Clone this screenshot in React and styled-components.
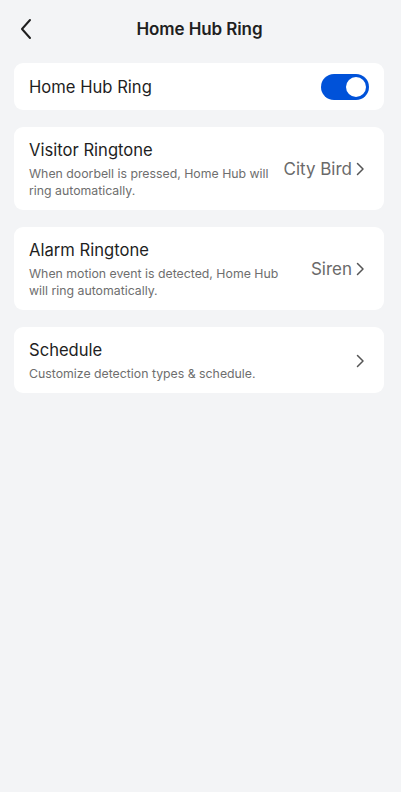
import React, { useState } from "react";
import styled, { createGlobalStyle } from "styled-components";

const Global = createGlobalStyle`
  html, body { margin: 0; padding: 0; background: #f3f4f6; }
  body { font-family: Inter, "Noto Sans", "Liberation Sans", sans-serif; -webkit-font-smoothing: antialiased; }
  * { box-sizing: border-box; }
`;

const Page = styled.div`
  min-height: 792px;
  background: #f3f4f6;
  display: flex;
  flex-direction: column;
`;

const Header = styled.header`
  height: 58px;
  display: flex;
  align-items: center;
  justify-content: center;
  position: relative;
`;

const BackButton = styled.button`
  position: absolute;
  left: 14px;
  top: 15px;
  width: 24px;
  height: 28px;
  border: 0;
  background: none;
  padding: 0;
  display: flex;
  align-items: center;
  justify-content: center;
  color: #1f1f1f;
`;

const Title = styled.h1`
  margin: 0 0 0 -2px;
  font-size: 17px;
  font-weight: 600;
  color: #1f1f1f;
  letter-spacing: -0.1px;
`;

const List = styled.div`
  display: flex;
  flex-direction: column;
  gap: 17px;
  padding: 5px 17px 0 14px;
`;

const Card = styled.div`
  background: #ffffff;
  border-radius: 9px;
  display: flex;
  align-items: center;
  justify-content: space-between;
  padding: ${(p) => (p.$compact ? "0 15px 0 15px" : "12px 19px 11px 15px")};
  min-height: ${(p) => (p.$compact ? "47px" : "auto")};
`;

const TextCol = styled.div`
  display: flex;
  flex-direction: column;
  flex: 0 1 254px;
`;

const ItemTitle = styled.div`
  font-size: 16.6px;
  color: #1f1f1f;
  line-height: 22px;
`;

const Desc = styled.div`
  font-size: 12.3px;
  color: #6e6e6e;
  line-height: 17px;
  margin-top: 4px;
`;

const Value = styled.div`
  display: flex;
  align-items: center;
  gap: 3px;
  font-size: 17px;
  color: #6a6a6a;
  white-space: nowrap;
`;

const Toggle = styled.button`
  width: 48px;
  height: 26px;
  border-radius: 13px;
  border: 0;
  padding: 3px;
  background: ${(p) => (p.$on ? "#0052d9" : "#c9cdd4")};
  display: flex;
  justify-content: ${(p) => (p.$on ? "flex-end" : "flex-start")};
  cursor: pointer;
`;

const Knob = styled.span`
  width: 20px;
  height: 20px;
  border-radius: 50%;
  background: #fff;
`;

const Chevron = () => (
  <svg width="10" height="16" viewBox="0 0 10 16" fill="none">
    <path d="M2.5 2.5 L8 8 L2.5 13.5" stroke="#555" strokeWidth="1.5" strokeLinecap="round" strokeLinejoin="round" />
  </svg>
);

const items = [
  { title: "Visitor Ringtone", desc: "When doorbell is pressed, Home Hub will ring automatically.", value: "City Bird" },
  { title: "Alarm Ringtone", desc: "When motion event is detected, Home Hub will ring automatically.", value: "Siren" },
  { title: "Schedule", desc: "Customize detection types & schedule.", value: "" },
];

export default function App() {
  const [on, setOn] = useState(true);
  return (
    <Page>
      <Global />
      <Header>
        <BackButton aria-label="Back">
          <svg width="14" height="22" viewBox="0 0 14 22" fill="none">
            <path d="M11 2 L3 11 L11 20" stroke="#1f1f1f" strokeWidth="2" strokeLinecap="round" strokeLinejoin="round" />
          </svg>
        </BackButton>
        <Title>Home Hub Ring</Title>
      </Header>
      <List>
        <Card $compact>
          <ItemTitle>Home Hub Ring</ItemTitle>
          <Toggle $on={on} onClick={() => setOn(!on)} aria-label="toggle">
            <Knob />
          </Toggle>
        </Card>
        {items.map((it) => (
          <Card key={it.title}>
            <TextCol>
              <ItemTitle>{it.title}</ItemTitle>
              <Desc>{it.desc}</Desc>
            </TextCol>
            <Value>
              {it.value}
              <Chevron />
            </Value>
          </Card>
        ))}
      </List>
    </Page>
  );
}
